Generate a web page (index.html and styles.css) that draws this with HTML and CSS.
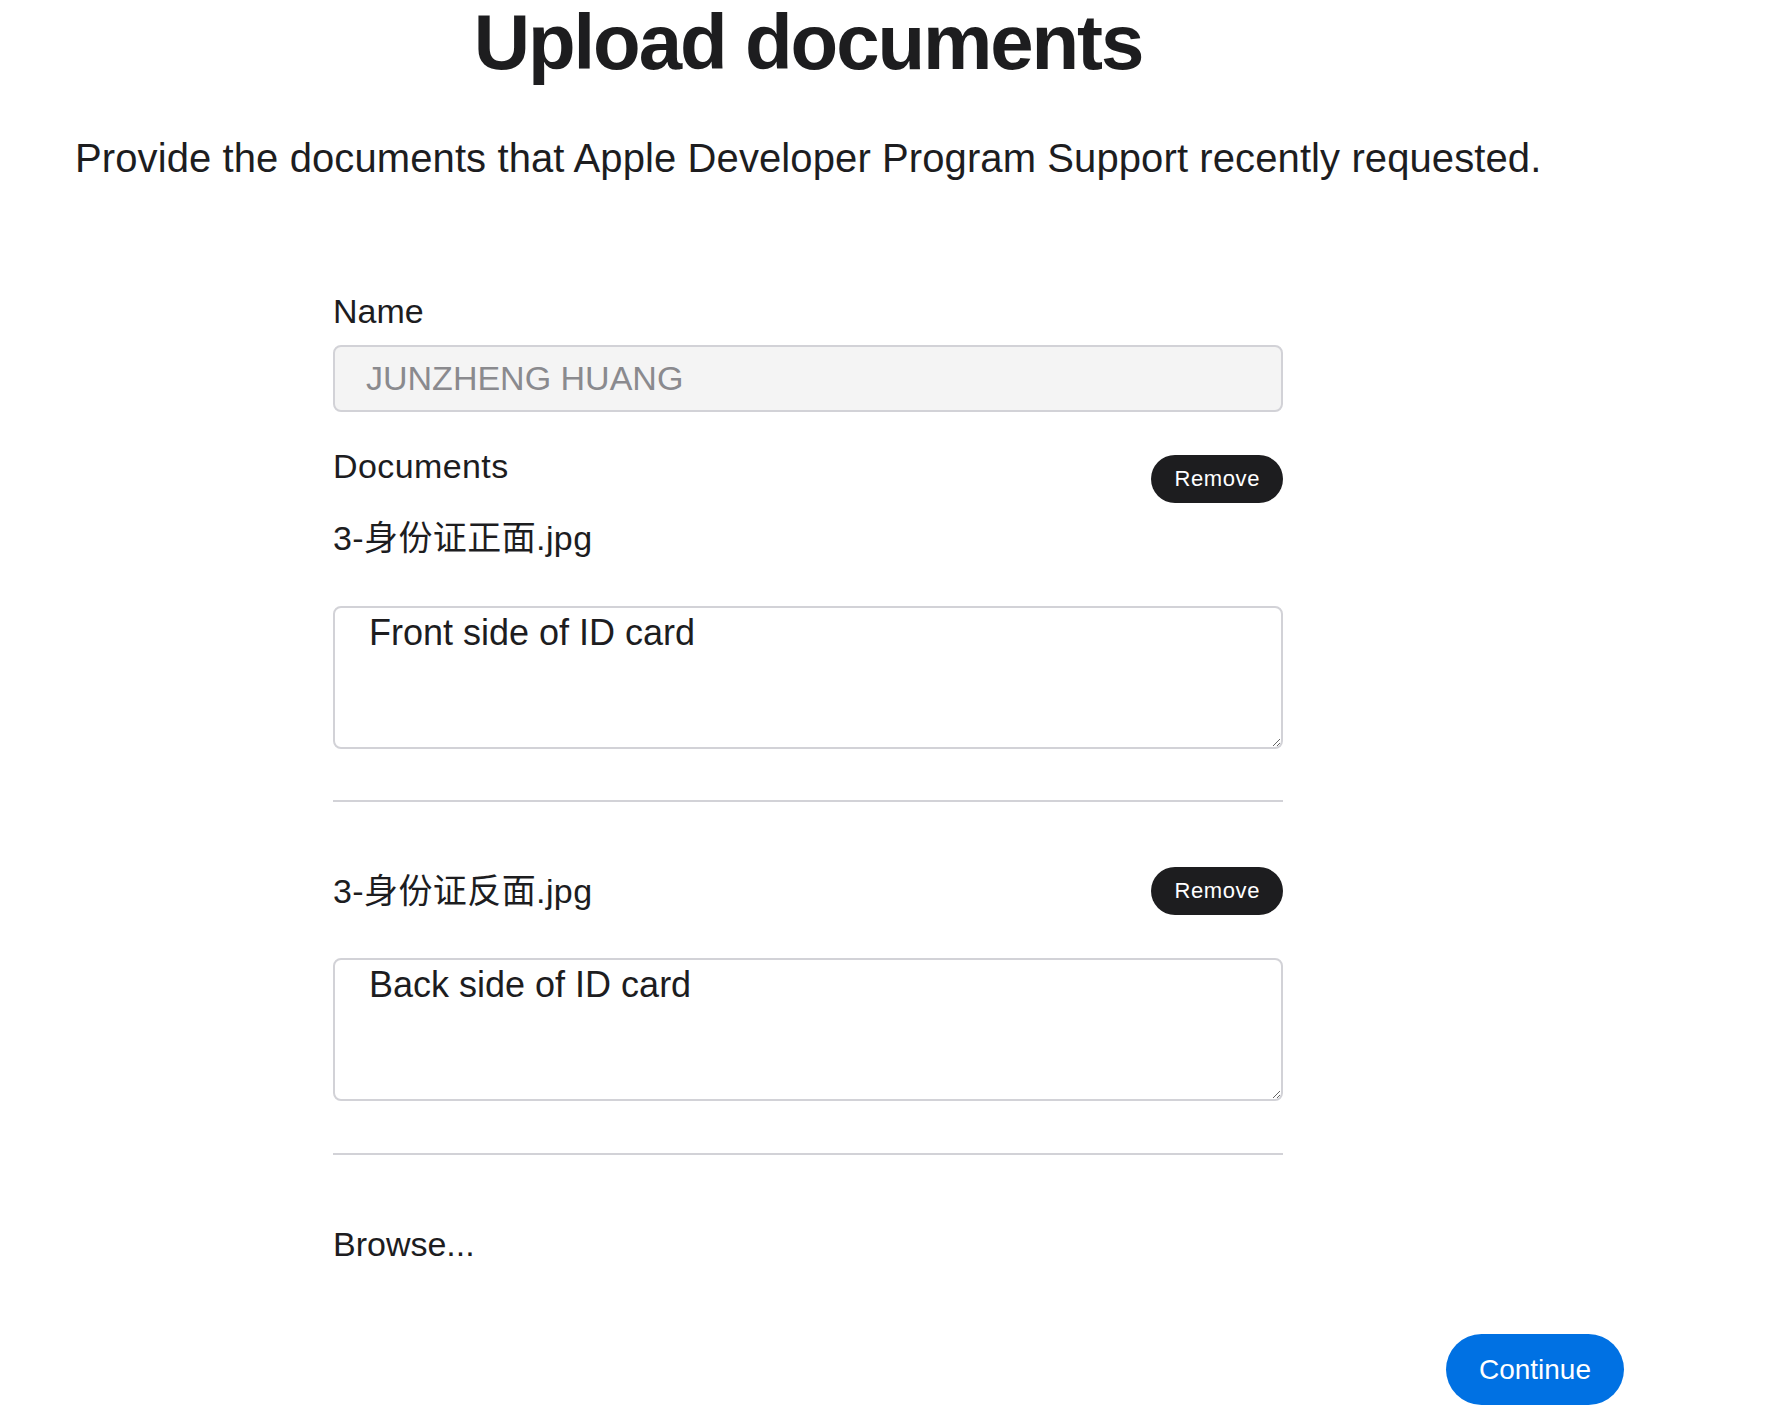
FILE: index.html
```
<!DOCTYPE html>
<html lang="en">
<head>
<meta charset="utf-8">
<title>Upload documents</title>
<link rel="stylesheet" href="styles.css">
</head>
<body>
<main class="page">
  <h1 class="title">Upload documents</h1>
  <p class="subtitle">Provide the documents that Apple Developer Program Support recently requested.</p>

  <form class="form">
    <label class="label" for="name">Name</label>
    <input class="name-input" id="name" type="text" value="JUNZHENG HUANG" readonly>

    <div class="doc">
      <div class="doc-row doc-row-first">
        <div class="doc-names">
          <div class="label label-wide">Documents</div>
          <div class="filename">3-身份证正面.jpg</div>
        </div>
        <button type="button" class="remove remove-first">Remove</button>
      </div>
      <textarea class="desc desc-first">Front side of ID card</textarea>
    </div>
    <hr class="divider">

    <div class="doc">
      <div class="doc-row doc-row-second">
        <div class="filename">3-身份证反面.jpg</div>
        <button type="button" class="remove">Remove</button>
      </div>
      <textarea class="desc desc-second">Back side of ID card</textarea>
    </div>
    <hr class="divider divider-last">

    <div class="browse">Browse...</div>
  </form>

  <div class="actions">
    <button type="button" class="continue">Continue</button>
  </div>
</main>
</body>
</html>
```

FILE: styles.css
```
html, body {
  margin: 0;
  padding: 0;
  background: #ffffff;
}

body {
  font-family: "Liberation Sans", Arial, "Noto Sans CJK SC", sans-serif;
  color: #1d1d1f;
}

.page {
  width: 1616px;
  padding-top: 3px;
}

.title {
  margin: 0;
  font-size: 78px;
  line-height: 78px;
  font-weight: 700;
  letter-spacing: -2.1px;
  text-align: center;
  color: #1d1d1f;
}

.subtitle {
  margin: 57px 0 0 0;
  padding-left: 75px;
  font-size: 40px;
  line-height: 40px;
  letter-spacing: 0.1px;
  color: #1d1d1f;
}

.form {
  width: 950px;
  margin: 116px auto 0 auto;
  display: flex;
  flex-direction: column;
}

.label {
  display: block;
  font-size: 34px;
  line-height: 34px;
  color: #1d1d1f;
}

.label-wide {
  letter-spacing: 0.4px;
}

.name-input {
  box-sizing: border-box;
  margin-top: 17px;
  width: 100%;
  height: 67px;
  padding: 0 0 0 31px;
  border: 2px solid #d2d2d7;
  border-radius: 8px;
  background: #f4f4f4;
  font-family: "Liberation Sans", Arial, sans-serif;
  font-size: 34px;
  color: #8a8a8e;
  outline: none;
}

.doc {
  display: flex;
  flex-direction: column;
}

.doc-row {
  display: flex;
  justify-content: space-between;
}

.doc-row-first {
  margin-top: 37px;
  align-items: flex-start;
}

.doc-row-second {
  margin-top: 65px;
  align-items: center;
}

.doc-names {
  display: flex;
  flex-direction: column;
}

.doc-names .filename {
  margin-top: 38px;
}

.filename {
  font-family: "Liberation Sans", Arial, "Noto Sans CJK SC", sans-serif;
  font-size: 34px;
  line-height: 34px;
  letter-spacing: 0.4px;
  color: #1d1d1f;
}

.remove {
  height: 48px;
  padding: 0 23px;
  border: none;
  border-radius: 24px;
  background: #1d1d1f;
  color: #ffffff;
  font-family: "Liberation Sans", Arial, sans-serif;
  font-size: 22px;
  letter-spacing: 0.6px;
  cursor: pointer;
}

.remove-first {
  margin-top: 6px;
}

.desc {
  box-sizing: border-box;
  display: block;
  width: 100%;
  height: 143px;
  margin-top: 51px;
  padding: 4px 34px;
  border: 2px solid #d2d2d7;
  border-radius: 8px;
  background: #ffffff;
  font-family: "Liberation Sans", Arial, sans-serif;
  font-size: 36px;
  line-height: 1.15;
  color: #1d1d1f;
  outline: none;
}

.desc-second {
  margin-top: 43px;
}

.divider {
  margin: 51px 0 0 0;
  height: 0;
  border: none;
  border-top: 2px solid #d2d2d7;
}

.divider-last {
  margin-top: 52px;
}

.browse {
  margin-top: 72px;
  font-size: 34px;
  line-height: 34px;
  color: #1d1d1f;
}

.actions {
  display: flex;
  justify-content: flex-end;
  margin-top: 73px;
  margin-right: -8px;
}

.continue {
  height: 71px;
  padding: 0 33px;
  border: none;
  border-radius: 36px;
  background: #0071e3;
  color: #ffffff;
  font-family: "Liberation Sans", Arial, sans-serif;
  font-size: 28px;
  cursor: pointer;
}
```
